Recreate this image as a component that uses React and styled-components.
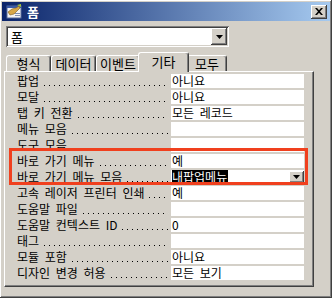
import React from 'react';
import styled, { createGlobalStyle } from 'styled-components';

const GlobalStyle = createGlobalStyle`
  html, body {
    margin: 0;
    padding: 0;
    background: #d4d0c8;
  }
  body {
    font-family: "Noto Sans CJK KR", "Noto Sans", sans-serif;
    font-size: 12px;
    color: #000;
  }
`;

const raised = `
  box-shadow: inset -1px -1px #404040, inset 1px 1px #ffffff,
    inset -2px -2px #808080, inset 2px 2px #d4d0c8;
`;

const Window = styled.div`
  position: relative;
  width: 332px;
  height: 298px;
  box-sizing: border-box;
  padding: 2px;
  background: #d4d0c8;
  ${raised}
`;

const TitleBar = styled.div`
  display: flex;
  align-items: center;
  height: 19px;
  padding: 0 3px 0 4px;
  gap: 5px;
  background: linear-gradient(to right, #0a246a, #a6caf0);
  color: #fff;
  font-size: 13px;
  font-weight: bold;
  line-height: 19px;
`;

const TitleText = styled.span`
  flex: 1;
`;

const CloseButton = styled.div`
  width: 16px;
  height: 14px;
  display: flex;
  align-items: center;
  justify-content: center;
  background: #d4d0c8;
  ${raised}
`;

const ComboRow = styled.div`
  padding: 5px 0 0 4px;
`;

const Combo = styled.div`
  display: flex;
  align-items: center;
  width: 223px;
  height: 21px;
  box-sizing: border-box;
  padding: 2px;
  background: #fff;
  box-shadow: inset 1px 1px #808080, inset -1px -1px #ffffff,
    inset 2px 2px #404040, inset -2px -2px #d4d0c8;
`;

const ComboText = styled.span`
  flex: 1;
  padding-left: 3px;
  font-size: 13px;
  line-height: 17px;
`;

const DropButton = styled.div`
  width: ${({ w }) => w || 16}px;
  height: ${({ h }) => h || 17}px;
  display: flex;
  align-items: center;
  justify-content: center;
  background: #d4d0c8;
  ${raised}
`;

const TabStrip = styled.div`
  display: flex;
  align-items: flex-end;
  height: 19px;
  margin-top: 5px;
  padding-left: 4px;
  position: relative;
  z-index: 1;
`;

const Tab = styled.div`
  width: ${({ w }) => w}px;
  height: ${({ active }) => (active ? 20 : 16)}px;
  margin: ${({ active }) => (active ? '0 -2px -1px -2px' : '0')};
  box-sizing: border-box;
  background: #d4d0c8;
  border-top: 1px solid #fff;
  border-left: 1px solid #fff;
  border-right: 1px solid #404040;
  border-radius: 3px 3px 0 0;
  box-shadow: inset -1px 0 #808080;
  text-align: center;
  font-size: 13px;
  line-height: ${({ active }) => (active ? 17 : 15)}px;
  position: relative;
  z-index: ${({ active }) => (active ? 2 : 1)};
`;

const Panel = styled.div`
  position: relative;
  margin-left: 2px;
  width: 310px;
  height: 216px;
  box-sizing: border-box;
  padding: 2px 0 0 12px;
  border-top: 1px solid #fff;
  border-left: 1px solid #fff;
  border-right: 1px solid #404040;
  border-bottom: 1px solid #404040;
  box-shadow: inset -1px -1px #808080;
`;

const Row = styled.div`
  display: grid;
  grid-template-columns: 154px 133px;
  height: 16px;
`;

const Label = styled.div`
  display: flex;
  height: 14px;
  line-height: 14px;
  white-space: nowrap;
  word-spacing: 3px;
  padding-right: 3px;
`;

const Leader = styled.span`
  flex: 1;
  margin-left: 5px;
  background-image: linear-gradient(to right, #000 0 1px, transparent 1px);
  background-size: 5px 1px;
  background-repeat: repeat-x;
  background-position: 0 11px;
`;

const Value = styled.div`
  display: flex;
  align-items: center;
  height: 14px;
  line-height: 14px;
  padding-left: 1px;
  background: #fff;
  white-space: nowrap;
  word-spacing: 3px;
`;

const Selected = styled.span`
  background: #000;
  color: #fff;
  padding-right: 1px;
`;

const Spacer = styled.span`
  flex: 1;
`;

const Highlight = styled.div`
  position: absolute;
  left: 4px;
  top: 76px;
  width: 299px;
  height: 37px;
  box-sizing: border-box;
  border: 3px solid #f0401e;
  pointer-events: none;
`;

const Arrow = () => (
  <svg width="7" height="4" viewBox="0 0 7 4">
    <path d="M0 0h7L3.5 4z" fill="#000" />
  </svg>
);

const FormIcon = () => (
  <svg width="16" height="15" viewBox="0 0 16 15">
    <rect x="1" y="2" width="14" height="12" fill="#f4f4f4" stroke="#5a6e9c" />
    <rect x="1" y="2" width="14" height="2" fill="#3a5aa8" />
    <path d="M2 8 L6 5 L10 4 L13 2 L14 4 L11 7 L8 10 L4 11 Z" fill="#d8a848" stroke="#7a5a20" strokeWidth="0.6" />
    <path d="M11 1 L15 0 L15 3 Z" fill="#a8c838" />
    <rect x="9" y="9" width="5" height="1" fill="#8090b0" />
    <rect x="9" y="11" width="5" height="1" fill="#8090b0" />
  </svg>
);

const tabs = [
  { name: '형식', w: 45 },
  { name: '데이터', w: 45 },
  { name: '이벤트', w: 44 },
  { name: '기타', w: 51, active: true },
  { name: '모두', w: 40 },
];

const props = [
  ['팝업', '아니요'],
  ['모달', '아니요'],
  ['탭 키 전환', '모든 레코드'],
  ['메뉴 모음', ''],
  ['도구 모음', ''],
  ['바로 가기 메뉴', '예'],
  ['바로 가기 메뉴 모음', '내팝업메뉴', true],
  ['고속 레이저 프린터 인쇄', '예'],
  ['도움말 파일', ''],
  ['도움말 컨텍스트 ID', '0'],
  ['태그', ''],
  ['모듈 포함', '아니요'],
  ['디자인 변경 허용', '모든 보기'],
];

export default function App() {
  return (
    <>
      <GlobalStyle />
      <Window>
        <TitleBar>
          <FormIcon />
          <TitleText>폼</TitleText>
          <CloseButton>
            <svg width="8" height="7" viewBox="0 0 8 7">
              <path d="M0 0h2l2 2.2L6 0h2L5 3.5 8 7H6L4 4.8 2 7H0l3-3.5z" fill="#000" />
            </svg>
          </CloseButton>
        </TitleBar>
        <ComboRow>
          <Combo>
            <ComboText>폼</ComboText>
            <DropButton>
              <Arrow />
            </DropButton>
          </Combo>
        </ComboRow>
        <TabStrip>
          {tabs.map((t) => (
            <Tab key={t.name} w={t.w} active={t.active}>
              {t.name}
            </Tab>
          ))}
        </TabStrip>
        <Panel>
          {props.map(([label, value, isSelect]) => (
            <Row key={label}>
              <Label>
                {label}
                <Leader />
              </Label>
              <Value>
                {isSelect ? (
                  <>
                    <Selected>{value}</Selected>
                    <Spacer />
                    <DropButton w={15} h={12}>
                      <Arrow />
                    </DropButton>
                  </>
                ) : (
                  value
                )}
              </Value>
            </Row>
          ))}
          <Highlight />
        </Panel>
      </Window>
    </>
  );
}
